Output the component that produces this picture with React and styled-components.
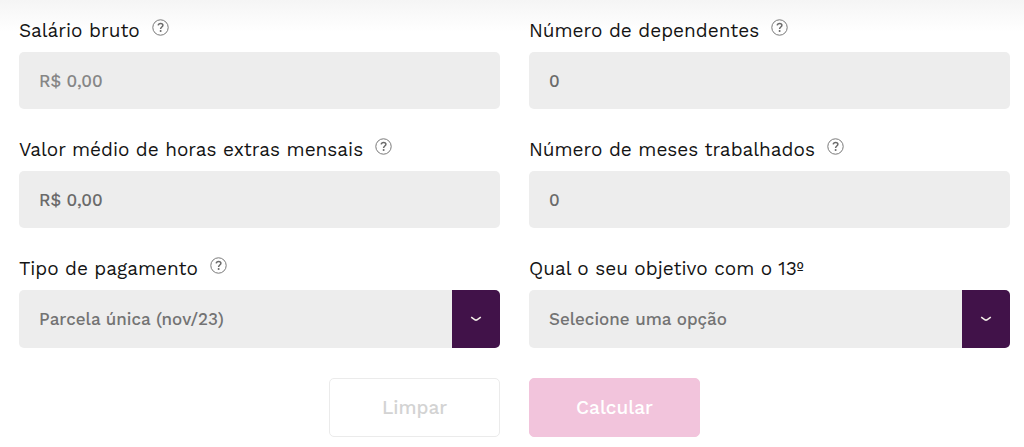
import React, { useId, useState } from 'react';
import styled, { createGlobalStyle } from 'styled-components';

const GlobalStyle = createGlobalStyle`
  *, *::before, *::after { box-sizing: border-box; }
  body {
    margin: 0;
    background: #fff;
    color: #141414;
    font-family: "Work Sans", Inter, "Liberation Sans", sans-serif;
  }
  button, input, select { font-family: inherit; margin: 0; }
`;

const Page = styled.main`
  padding: 19px 14px 10px 19px;
  background: linear-gradient(#f5f5f5, #fff 32px);
`;

const Form = styled.form`
  display: flex;
  flex-direction: column;
  gap: 30px;
`;

const Fields = styled.div`
  display: grid;
  grid-template-columns: repeat(2, minmax(0, 1fr));
  gap: 29px;
`;

const FieldBox = styled.div`
  display: flex;
  flex-direction: column;
  gap: 9px;
`;

const LabelRow = styled.div`
  display: flex;
  align-items: flex-start;
  gap: 12px;
  height: 24px;
`;

const Label = styled.label`
  font-size: 19px;
  line-height: 24px;
  white-space: nowrap;
`;

const HelpButton = styled.button`
  display: block;
  width: 17px;
  height: 17px;
  padding: 0;
  border: 0;
  background: none;
  color: #6a6a6a;
  cursor: pointer;

  svg { display: block; }
`;

const Input = styled.input`
  width: 100%;
  height: 57px;
  padding: 0 20px;
  border: 0;
  border-radius: 5px;
  background: #ededed;
  color: #6a6a6a;
  font-size: 17px;
  font-weight: 500;

  &::placeholder { color: #868686; opacity: 1; }
`;

const SelectBox = styled.div`
  display: grid;
  grid-template-columns: minmax(0, 1fr) 48px;
  height: 58px;
`;

const Select = styled.select`
  grid-area: 1 / 1 / 2 / 3;
  appearance: none;
  padding: 0 60px 0 20px;
  border: 0;
  border-radius: 5px;
  background: #ededed;
  color: #737373;
  font-size: 17px;
  font-weight: 500;
`;

const Arrow = styled.span`
  grid-area: 1 / 2 / 2 / 3;
  display: flex;
  align-items: center;
  justify-content: center;
  border-radius: 0 5px 5px 0;
  background: #411249;
  pointer-events: none;
`;

const Actions = styled.div`
  display: flex;
  justify-content: center;
  gap: 29px;
`;

const ActionButton = styled.button`
  width: 171px;
  height: 59px;
  border: 1px solid ${({ $primary }) => ($primary ? '#f2c4dc' : '#ebebeb')};
  border-radius: 5px;
  background: ${({ $primary }) => ($primary ? '#f2c4dc' : '#fff')};
  color: ${({ $primary }) => ($primary ? '#fff' : '#d3d3d3')};
  font-size: 19px;
  font-weight: 500;
  cursor: pointer;
`;

function Help({ about }) {
  return (
    <HelpButton type="button" aria-label={`Ajuda: ${about}`}>
      <svg width="17" height="17" viewBox="0 0 17 17" fill="none" stroke="currentColor" aria-hidden="true">
        <circle cx="8.5" cy="8.5" r="7.7" strokeWidth="0.9" />
        <path d="M6.2 6.4C6.4 5 7.3 4.4 8.6 4.4C9.9 4.4 10.9 5.2 10.9 6.3C10.9 8 8.6 8 8.6 9.9" strokeWidth="1.5" />
        <circle cx="8.6" cy="12" r="1" fill="currentColor" stroke="none" />
      </svg>
    </HelpButton>
  );
}

function Field({ label, help, children }) {
  const id = useId();
  return (
    <FieldBox>
      <LabelRow>
        <Label htmlFor={id}>{label}</Label>
        {help && <Help about={label} />}
      </LabelRow>
      {children(id)}
    </FieldBox>
  );
}

function Dropdown({ id, options }) {
  return (
    <SelectBox>
      <Select id={id}>
        {options.map((option) => <option key={option}>{option}</option>)}
      </Select>
      <Arrow>
        <svg width="12" height="8" viewBox="0 0 12 8" fill="none" stroke="#f3eee8" strokeWidth="1.6" aria-hidden="true">
          <path d="M1.2 2.2L5 4.8Q6 5.4 7 4.8L10.8 2.2" />
        </svg>
      </Arrow>
    </SelectBox>
  );
}

export default function App() {
  const [overtime, setOvertime] = useState('R$ 0,00');
  const [dependents, setDependents] = useState('0');
  const [months, setMonths] = useState('0');

  return (
    <>
      <GlobalStyle />
      <Page>
        <Form onSubmit={(event) => event.preventDefault()}>
          <Fields>
            <Field label="Salário bruto" help>
              {(id) => <Input id={id} placeholder="R$ 0,00" />}
            </Field>
            <Field label="Número de dependentes" help>
              {(id) => <Input id={id} value={dependents} onChange={(e) => setDependents(e.target.value)} />}
            </Field>
            <Field label="Valor médio de horas extras mensais" help>
              {(id) => <Input id={id} value={overtime} onChange={(e) => setOvertime(e.target.value)} />}
            </Field>
            <Field label="Número de meses trabalhados" help>
              {(id) => <Input id={id} value={months} onChange={(e) => setMonths(e.target.value)} />}
            </Field>
            <Field label="Tipo de pagamento" help>
              {(id) => <Dropdown id={id} options={['Parcela única (nov/23)']} />}
            </Field>
            <Field label="Qual o seu objetivo com o 13º">
              {(id) => <Dropdown id={id} options={['Selecione uma opção']} />}
            </Field>
          </Fields>
          <Actions>
            <ActionButton type="reset">Limpar</ActionButton>
            <ActionButton type="submit" $primary>Calcular</ActionButton>
          </Actions>
        </Form>
      </Page>
    </>
  );
}
